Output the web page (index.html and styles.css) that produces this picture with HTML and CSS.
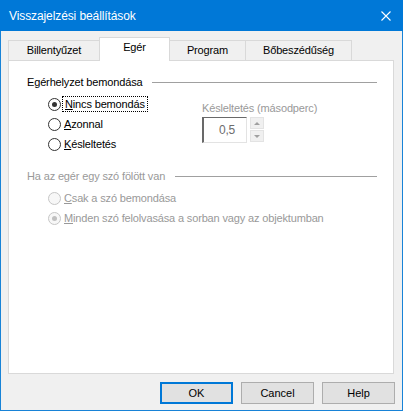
FILE: index.html
```html
<!DOCTYPE html>
<html lang="hu">
<head>
    <meta charset="UTF-8">
    <meta name="viewport" content="width=device-width, initial-scale=1.0">
    <title>Visszajelzési beállítások</title>
    <link rel="stylesheet" href="styles.css">
</head>
<body>
    <div class="dialog">
        <div class="titlebar">
            <span class="title">Visszajelzési beállítások</span>
            <svg class="close" width="10" height="10" viewBox="0 0 10 10">
                <path d="M0.5 0.5 L9.5 9.5 M9.5 0.5 L0.5 9.5" stroke="#fff" stroke-width="1.1" fill="none"/>
            </svg>
        </div>

        <div class="tabs">
            <div class="tab tab-keyboard">Billentyűzet</div>
            <div class="tab tab-mouse active">Egér</div>
            <div class="tab tab-program">Program</div>
            <div class="tab tab-verbose">Bőbeszédűség</div>
        </div>

        <div class="panel">
            <!-- Egérhelyzet -->
            <div class="group-head">
                <span>Egérhelyzet bemondása</span>
                <span class="rule"></span>
            </div>
            <div class="group-body">
                <div class="radios">
                    <label class="radio">
                        <span class="dot checked"></span>
                        <span class="focus"><u>N</u>incs bemondás</span>
                    </label>
                    <label class="radio">
                        <span class="dot"></span>
                        <span><u>A</u>zonnal</span>
                    </label>
                    <label class="radio">
                        <span class="dot"></span>
                        <span><u>K</u>ésleltetés</span>
                    </label>
                </div>
                <div class="delay">
                    <div class="delay-label">Késleltetés (másodperc)</div>
                    <div class="spin">
                        <div class="spin-box">0,5</div>
                        <div class="spin-btns">
                            <div class="spin-btn"><span class="arrow up"></span></div>
                            <div class="spin-btn"><span class="arrow down"></span></div>
                        </div>
                    </div>
                </div>
            </div>

            <!-- Szó fölött -->
            <div class="group-head second disabled">
                <span>Ha az egér egy szó fölött van</span>
                <span class="rule"></span>
            </div>
            <div class="group-body">
                <div class="radios disabled">
                    <label class="radio">
                        <span class="dot"></span>
                        <span><u>C</u>sak a szó bemondása</span>
                    </label>
                    <label class="radio">
                        <span class="dot checked"></span>
                        <span><u>M</u>inden szó felolvasása a sorban vagy az objektumban</span>
                    </label>
                </div>
            </div>
        </div>

        <div class="footer">
            <button class="btn default">OK</button>
            <button class="btn">Cancel</button>
            <button class="btn">Help</button>
        </div>
    </div>
</body>
</html>
```

FILE: styles.css
```css
body {
    margin: 0;
    font-family: "Liberation Sans", Arial, sans-serif;
    font-size: 11px;
    letter-spacing: -0.15px;
    color: #000;
    background-color: #f0f0f0;
}

.dialog {
    width: 403px;
    height: 411px;
    box-sizing: border-box;
    border: 1px solid #1883d7;
    border-top: none;
    background-color: #f0f0f0;
}

.titlebar {
    height: 31px;
    margin: 0 -1px;
    background-color: #0078d7;
    color: #fff;
    display: flex;
    align-items: center;
    justify-content: space-between;
    padding: 0 12px 0 9px;
}

.title {
    font-size: 12px;
    letter-spacing: -0.1px;
}

/* tabs */
.tabs {
    display: flex;
    align-items: flex-end;
    height: 23px;
    margin: 6px 0 0 7px;
}

.tab {
    box-sizing: border-box;
    height: 20px;
    line-height: 19px;
    text-align: center;
    border: 1px solid #d9d9d9;
    border-bottom: none;
    background-color: #f0f0f0;
    margin-left: -1px;
}

.tab-keyboard { width: 92px; margin-left: 0; }
.tab-mouse { width: 71px; }
.tab-program { width: 77px; }
.tab-verbose { width: 107px; }

.tab.active {
    height: 24px;
    line-height: 18px;
    background-color: #fff;
    margin-bottom: -1px;
    position: relative;
    z-index: 1;
}

/* panel */
.panel {
    box-sizing: border-box;
    width: 386px;
    height: 314px;
    margin-left: 7px;
    padding: 14px 16px 0 18px;
    background-color: #fff;
    border: 1px solid #d9d9d9;
}

.group-head {
    display: flex;
    align-items: center;
    gap: 10px;
    line-height: 14px;
}

.group-head .rule {
    flex: 1;
    height: 1px;
    background-color: #a0a0a0;
}

.group-head.second {
    margin-top: 15px;
}

.disabled {
    color: #999;
}

.group-body {
    display: flex;
    margin-top: 5px;
}

.radios {
    width: 154px;
    margin-left: 21px;
    flex-shrink: 0;
}

.radio {
    display: flex;
    align-items: center;
    gap: 3px;
    height: 20px;
    white-space: nowrap;
}

.dot {
    box-sizing: border-box;
    width: 13px;
    height: 13px;
    border: 1px solid #333;
    border-radius: 50%;
    background-color: #fff;
    display: flex;
    align-items: center;
    justify-content: center;
    flex-shrink: 0;
}

.dot.checked::after {
    content: "";
    width: 5px;
    height: 5px;
    border-radius: 50%;
    background-color: #333;
}

.radios.disabled .dot {
    border-color: #c6c6c6;
    background-color: #f7f7f7;
}

.radios.disabled .dot.checked::after {
    background-color: #c0c0c0;
}

.focus {
    outline: 1px dotted #000;
    outline-offset: 1px;
    padding: 0 1px;
}

/* delay spinner */
.delay {
    margin-top: 7px;
    color: #999;
}

.delay-label {
    line-height: 14px;
}

.spin {
    display: flex;
    gap: 3px;
    margin-top: 2px;
}

.spin-box {
    box-sizing: border-box;
    width: 45px;
    height: 26px;
    border-top: 1px solid #696969;
    border-left: 2px solid #696969;
    border-right: 1px solid #e3e3e3;
    border-bottom: 1px solid #e3e3e3;
    background-color: #fff;
    color: #6d6d6d;
    font-size: 12px;
    line-height: 24px;
    text-align: center;
    padding-left: 4px;
}

.spin-btns {
    display: flex;
    flex-direction: column;
    gap: 1px;
}

.spin-btn {
    box-sizing: border-box;
    width: 14px;
    height: 12px;
    background-color: #f0f0f0;
    border: 1px solid #e3e3e3;
    display: flex;
    align-items: center;
    justify-content: center;
}

.arrow {
    width: 0;
    height: 0;
    border-left: 3px solid transparent;
    border-right: 3px solid transparent;
}

.arrow.up { border-bottom: 3px solid #a0a0a0; }
.arrow.down { border-top: 3px solid #a0a0a0; }

/* buttons */
.footer {
    display: flex;
    justify-content: flex-end;
    gap: 8px;
    margin-top: 8px;
    padding-right: 7px;
}

.btn {
    box-sizing: border-box;
    width: 73px;
    height: 22px;
    padding: 0;
    font-family: "Liberation Sans", Arial, sans-serif;
    font-size: 11px;
    color: #000;
    background-color: #e1e1e1;
    border: 1px solid #adadad;
}

.btn.default {
    border: 2px solid #0078d7;
}
```
